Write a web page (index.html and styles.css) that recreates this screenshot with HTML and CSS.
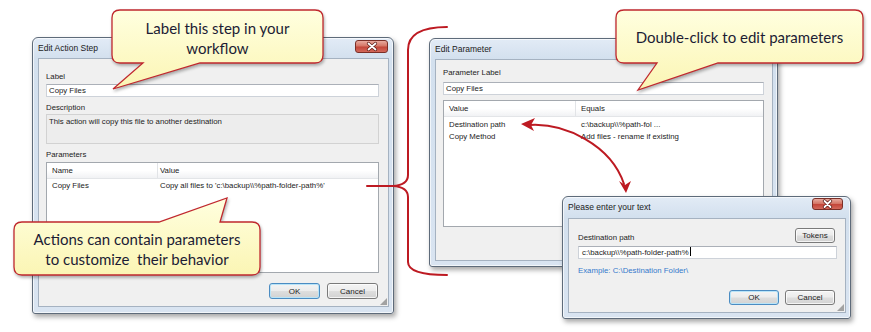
FILE: index.html
```
<!DOCTYPE html>
<html lang="en">
<head>
<meta charset="utf-8">
<title>Workflow parameters</title>
<link rel="stylesheet" href="styles.css">
</head>
<body>
<div class="canvas">

  <section class="window win-action">
    <header class="titlebar">
      <span class="title">Edit Action Step</span>
      <span class="close"><svg viewBox="0 0 32 13" width="32" height="13"><path d="M12.5 3.5 L19.5 9.5 M19.5 3.5 L12.5 9.5" stroke="#5a1a14" stroke-width="3.2" stroke-linecap="round"/><path d="M12.5 3.5 L19.5 9.5 M19.5 3.5 L12.5 9.5" stroke="#fff" stroke-width="1.8" stroke-linecap="round"/></svg></span>
    </header>
    <div class="client client-action">
      <div class="field-label">Label</div>
      <div class="textbox">Copy Files</div>
      <div class="field-label gap">Description</div>
      <div class="textbox readonly desc">This action will copy this file to another destination</div>
      <div class="field-label gap">Parameters</div>
      <div class="listview list-params">
        <div class="lv-head">
          <span class="col col-name">Name</span>
          <span class="col col-value">Value</span>
        </div>
        <div class="lv-body">
          <div class="lv-row">
            <span class="col col-name">Copy Files</span>
            <span class="col col-value">Copy all files to 'c:\backup\\%path-folder-path%'</span>
          </div>
        </div>
      </div>
      <div class="button-row">
        <button class="btn default">OK</button>
        <button class="btn">Cancel</button>
      </div>
    </div>
  </section>

  <section class="window win-param">
    <header class="titlebar">
      <span class="title">Edit Parameter</span>
      <span class="close"><svg viewBox="0 0 32 13" width="32" height="13"><path d="M12.5 3.5 L19.5 9.5 M19.5 3.5 L12.5 9.5" stroke="#5a1a14" stroke-width="3.2" stroke-linecap="round"/><path d="M12.5 3.5 L19.5 9.5 M19.5 3.5 L12.5 9.5" stroke="#fff" stroke-width="1.8" stroke-linecap="round"/></svg></span>
    </header>
    <div class="client client-param">
      <div class="field-label">Parameter Label</div>
      <div class="textbox tb-param">Copy Files</div>
      <div class="listview list-values">
        <div class="lv-head">
          <span class="col col-name">Value</span>
          <span class="col col-value">Equals</span>
        </div>
        <div class="lv-body">
          <div class="lv-row">
            <span class="col col-name">Destination path</span>
            <span class="col col-value">c:\backup\\%path-fol ...</span>
          </div>
          <div class="lv-row">
            <span class="col col-name">Copy Method</span>
            <span class="col col-value">Add files - rename if existing</span>
          </div>
        </div>
      </div>
      <div class="button-row">
        <button class="btn default">OK</button>
        <button class="btn">Cancel</button>
      </div>
    </div>
  </section>

  <section class="window win-prompt">
    <header class="titlebar tb-prompt">
      <span class="title">Please enter your text</span>
      <span class="close close-sm"><svg viewBox="0 0 31 12" width="31" height="12"><path d="M12.5 3 L18.5 9 M18.5 3 L12.5 9" stroke="#5a1a14" stroke-width="3.2" stroke-linecap="round"/><path d="M12.5 3 L18.5 9 M18.5 3 L12.5 9" stroke="#fff" stroke-width="1.8" stroke-linecap="round"/></svg></span>
    </header>
    <div class="client client-prompt">
      <div class="prompt-top">
        <div class="field-label">Destination path</div>
        <button class="btn btn-tokens">Tokens</button>
      </div>
      <div class="textbox tb-prompt-input">c:\backup\\%path-folder-path%<span class="caret"></span></div>
      <div class="example">Example: C:\Destination Folder\</div>
      <div class="button-row row-prompt">
        <button class="btn default">OK</button>
        <button class="btn">Cancel</button>
      </div>
    </div>
  </section>

  <svg class="annotations" width="871" height="332" viewBox="0 0 871 332">
    <path class="red-line" d="M367 186 H393"/>
    <path class="red-line" d="M447 27 Q408 27 408 50 V175 Q408 185 393 186 Q408 187 408 197 V262 Q408 275 447 275"/>
    <path class="red-line" d="M530 125 C565 123 611 145 624 184"/>
    <polygon class="red-head" points="521,124 535,118 531,125 534,131"/>
    <polygon class="red-head" points="626,193 619,181 625,185 631,181"/>
  </svg>

  <div class="callout callout-label">
    <svg class="bubble" width="226" height="90" viewBox="0 0 226 90">
      <defs>
        <linearGradient id="fillA" x1="0" y1="0" x2="0" y2="1">
          <stop offset="0" stop-color="#ffffdf"/>
          <stop offset="1" stop-color="#fbf5b4"/>
        </linearGradient>
      </defs>
      <path d="M15 6 H210 Q218 6 218 14 V51 Q218 59 210 59 H95 L8 85 L38 59 H15 Q7 59 7 51 V14 Q7 6 15 6 Z" fill="url(#fillA)" stroke="#c0282e" stroke-width="1.3"/>
    </svg>
    <p class="callout-text ct-label">Label this step in your<br>workflow</p>
  </div>

  <div class="callout callout-params">
    <svg class="bubble" width="260" height="90" viewBox="0 0 260 90">
      <defs>
        <linearGradient id="fillB" x1="0" y1="0" x2="0" y2="1">
          <stop offset="0" stop-color="#ffffdf"/>
          <stop offset="1" stop-color="#fbf5b4"/>
        </linearGradient>
      </defs>
      <path d="M14 30 H151 L219 6 L212 30 H244 Q252 30 252 38 V75 Q252 83 244 83 H14 Q6 83 6 75 V38 Q6 30 14 30 Z" fill="url(#fillB)" stroke="#c0282e" stroke-width="1.3"/>
    </svg>
    <p class="callout-text ct-params">Actions can contain parameters<br>to customize&nbsp; their behavior</p>
  </div>

  <div class="callout callout-dbl">
    <svg class="bubble" width="262" height="92" viewBox="0 0 262 92">
      <defs>
        <linearGradient id="fillC" x1="0" y1="0" x2="0" y2="1">
          <stop offset="0" stop-color="#ffffdf"/>
          <stop offset="1" stop-color="#fbf5b4"/>
        </linearGradient>
      </defs>
      <path d="M16 6 H247 Q255 6 255 14 V51 Q255 59 247 59 H110 L30 86 L49 59 H16 Q8 59 8 51 V14 Q8 6 16 6 Z" fill="url(#fillC)" stroke="#c0282e" stroke-width="1.3"/>
    </svg>
    <p class="callout-text ct-dbl">Double-click to edit parameters</p>
  </div>

</div>
</body>
</html>
```
FILE: styles.css
```
* { box-sizing: border-box; }

body {
  margin: 0;
  background: #ffffff;
  font-family: "Liberation Sans", Arial, sans-serif;
  color: #222;
}

.canvas {
  position: relative;
  width: 871px;
  height: 332px;
  overflow: hidden;
  background: #fff;
}

/* ---------- windows ---------- */
.window {
  position: absolute;
  display: flex;
  flex-direction: column;
  border: 1px solid #5e6b7a;
  border-radius: 6px 6px 3px 3px;
  background: linear-gradient(180deg, #e2ebf6 0, #d3e0ee 20px, #d9e4f1 100%);
  box-shadow: 2px 3px 5px rgba(0, 0, 0, 0.35), inset 0 0 0 1px rgba(255, 255, 255, 0.65);
}

.win-action { left: 32px; top: 37px; width: 362px; height: 277px; }
.win-param  { left: 429px; top: 38px; width: 349px; height: 229px; }
.win-prompt { left: 562px; top: 196px; width: 289px; height: 123px; }

.titlebar {
  height: 20px;
  flex: none;
  display: flex;
  align-items: flex-start;
  padding: 0 5px;
}
.tb-prompt { height: 21px; padding-right: 7px; }

.title {
  font-size: 8.5px;
  line-height: 20px;
  color: #1a1a1a;
}

.close {
  margin-left: auto;
  margin-top: 2px;
  width: 33px;
  height: 13px;
  border: 1px solid #7b2f27;
  border-radius: 3px;
  background: linear-gradient(180deg, #e8aa9e 0, #d57767 45%, #c4473a 55%, #d3685a 100%);
  display: flex;
  align-items: center;
  justify-content: center;
  overflow: hidden;
}
.close svg { display: block; flex: none; }
.close-sm { width: 31px; height: 12px; margin-top: 1px; }

.client {
  flex: 1;
  position: relative;
  display: flex;
  flex-direction: column;
  margin: 0 4px 6px 5px;
  background: #f0f0f0;
  border: 1px solid #a5b2c1;
}
.client-action { padding: 13px 9px 7px 7px; }
.client-param  { padding: 8px 8px 8px 7px; margin-bottom: 5px; }
.client-prompt { padding: 9px 8px 7px 9px; margin-bottom: 5px; }

.client-action::after,
.client-prompt::after {
  content: "";
  position: absolute;
  right: 1px;
  bottom: 1px;
  width: 7px;
  height: 7px;
  background-image: radial-gradient(circle, #a0a0a0 0.7px, transparent 1px);
  background-size: 2px 2px;
  clip-path: polygon(100% 0, 100% 100%, 0 100%);
}

.field-label {
  font-size: 7.8px;
  line-height: 10px;
  height: 10px;
  color: #222;
}
.field-label.gap { margin-top: 6px; }

.textbox {
  margin-top: 2px;
  height: 13px;
  flex: none;
  background: #fff;
  border: 1px solid #cdd2d9;
  border-top-color: #abb0b8;
  font-size: 7.8px;
  line-height: 11px;
  padding-left: 2px;
  color: #222;
  white-space: nowrap;
  overflow: hidden;
}
.textbox.readonly {
  background: #ededed;
  border-color: #d2d2d2;
}
.textbox.desc {
  margin-top: 1px;
  height: 30px;
  padding-top: 2px;
  line-height: 10px;
}
.tb-param { margin-top: 4px; }
.tb-prompt-input { margin-top: 3px; padding-left: 3px; }

.caret {
  display: inline-block;
  width: 1px;
  height: 9px;
  margin-left: 1px;
  vertical-align: -1px;
  background: #000;
}

/* ---------- list views ---------- */
.listview {
  flex: 1;
  display: flex;
  flex-direction: column;
  background: #fff;
  border: 1px solid #a3a8ae;
  margin-top: 2px;
}
.list-values { margin-top: 5px; }

.lv-head {
  display: flex;
  height: 16px;
  flex: none;
  background: linear-gradient(180deg, #ffffff 0, #ffffff 50%, #f1f2f4 100%);
  border-bottom: 1px solid #e3e5e8;
}
.lv-head .col { line-height: 15px; }
.lv-head .col-name { border-right: 1px solid #e2e4e7; }

.lv-body { padding-top: 1px; }
.list-values .lv-body { padding-top: 2px; }

.lv-row {
  display: flex;
  height: 13px;
}
.list-values .lv-row { height: 12px; }

.col {
  font-size: 7.8px;
  line-height: 12px;
  padding-left: 5px;
  white-space: nowrap;
  color: #222;
}
.col-value { flex: 1; }

.list-params .col-name { width: 111px; }
.list-params .col-value { padding-left: 2px; }
.list-values .col-name { width: 132px; }
.list-values .col-value { padding-left: 5px; }

/* ---------- buttons ---------- */
.button-row {
  display: flex;
  justify-content: flex-end;
  gap: 7px;
  margin-top: 10px;
  padding-right: 1px;
  flex: none;
}
.client-param .button-row { margin-top: 9px; }
.row-prompt { margin-top: 14px; gap: 6px; padding-right: 2px; }

.btn {
  width: 51px;
  height: 16px;
  padding: 0;
  font-family: "Liberation Sans", Arial, sans-serif;
  font-size: 8px;
  color: #1e1e1e;
  border: 1px solid #7a7a7a;
  border-radius: 3px;
  background: linear-gradient(180deg, #f4f4f4 0, #ececec 48%, #dedede 52%, #d2d2d2 100%);
  box-shadow: inset 0 0 0 1px rgba(255, 255, 255, 0.75);
}
.btn.default {
  border-color: #4b8cc2;
  box-shadow: inset 0 0 0 1px #b9e4f8;
}
.row-prompt .btn { width: 50px; height: 15px; }

.prompt-top {
  display: flex;
  justify-content: space-between;
  align-items: flex-end;
}
.btn-tokens {
  width: 40px;
  height: 15px;
  margin-right: 2px;
}

.example {
  margin-top: 7px;
  font-size: 7.8px;
  line-height: 10px;
  color: #3479cc;
}

/* ---------- annotations ---------- */
.annotations {
  position: absolute;
  left: 0;
  top: 0;
  pointer-events: none;
}
.red-line {
  fill: none;
  stroke: #bd1a22;
  stroke-width: 2;
  stroke-linecap: round;
}
.red-head { fill: #bd1a22; }

.callout {
  position: absolute;
}
.callout .bubble {
  position: absolute;
  left: 0;
  top: 0;
  filter: drop-shadow(1.5px 2px 1.5px rgba(0, 0, 0, 0.3));
}
.callout-text {
  position: relative;
  margin: 0;
  font-family: Lato, "Open Sans", sans-serif;
  font-size: 15px;
  line-height: 20px;
  color: #1c1c34;
  text-align: center;
  white-space: nowrap;
}

.callout-label  { left: 105px; top: 4px;   width: 226px; height: 90px; }
.callout-params { left: 8px;   top: 192px; width: 260px; height: 90px; }
.callout-dbl    { left: 608px; top: 4px;   width: 262px; height: 92px; }

.ct-label  { padding-top: 14px; margin-left: 7px; width: 211px; }
.ct-params { padding-top: 37px; margin-left: 6px; width: 246px; }
.ct-dbl    { padding-top: 23px; margin-left: 8px; width: 247px; }
```
